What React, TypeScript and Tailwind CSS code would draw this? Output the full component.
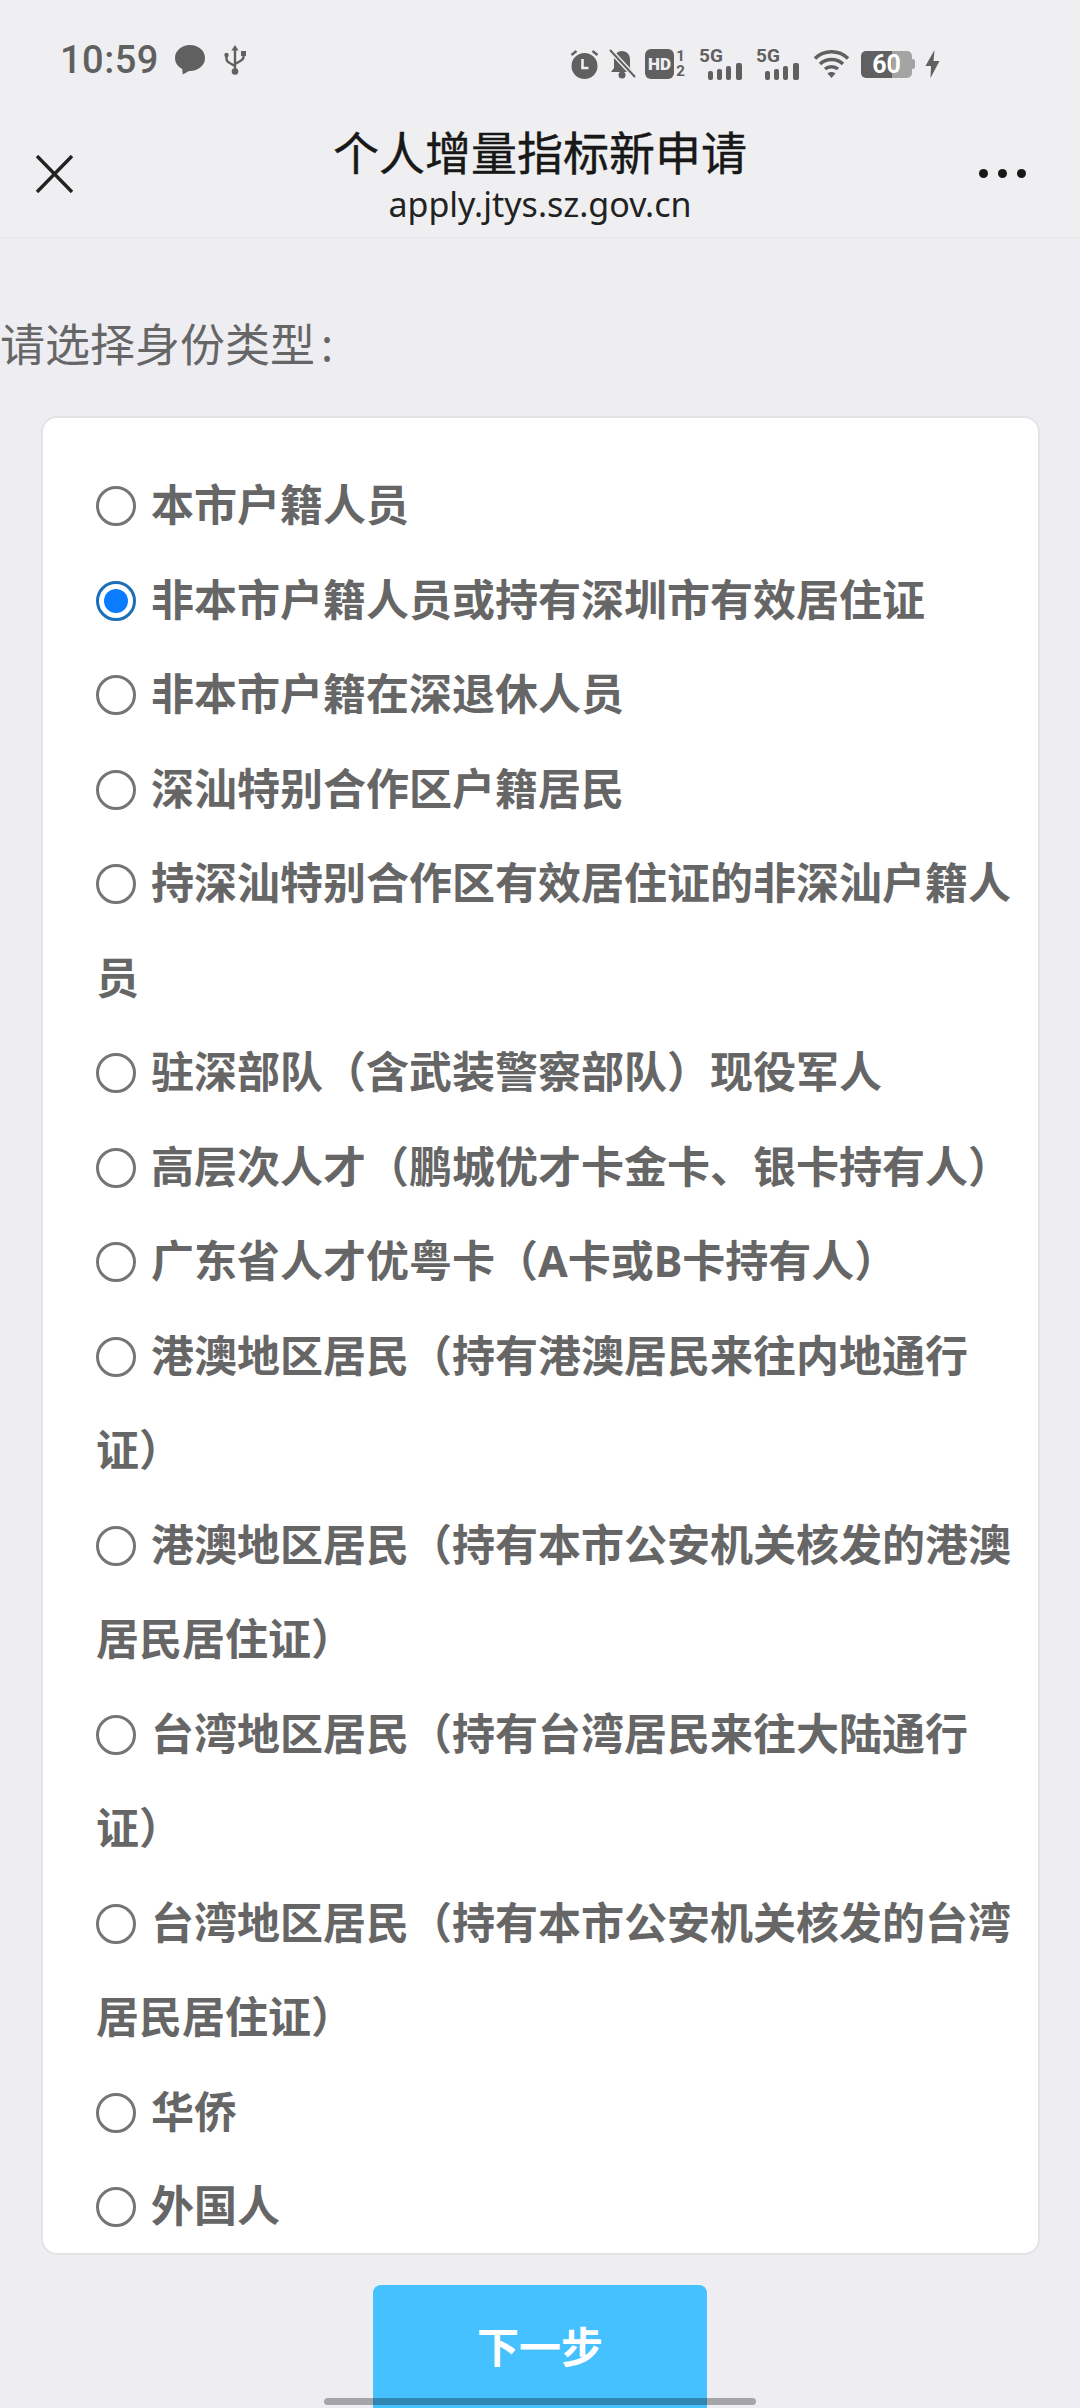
const OPTIONS = [
  '本市户籍人员',
  '非本市户籍人员或持有深圳市有效居住证',
  '非本市户籍在深退休人员',
  '深汕特别合作区户籍居民',
  '持深汕特别合作区有效居住证的非深汕户籍人员',
  '驻深部队（含武装警察部队）现役军人',
  '高层次人才（鹏城优才卡金卡、银卡持有人）',
  '广东省人才优粤卡（A卡或B卡持有人）',
  '港澳地区居民（持有港澳居民来往内地通行证）',
  '港澳地区居民（持有本市公安机关核发的港澳居民居住证）',
  '台湾地区居民（持有台湾居民来往大陆通行证）',
  '台湾地区居民（持有本市公安机关核发的台湾居民居住证）',
  '华侨',
  '外国人',
]

const FONT = "font-['Noto_Sans','Noto_Sans_CJK_SC',sans-serif]"

function Signal() {
  return (
    <div className="flex h-[32px] w-[44px] flex-col">
      <span className="h-[15px] font-['Roboto',sans-serif] text-[19px] font-bold leading-[15px] text-[#606060]">5G</span>
      <svg width="44" height="17" viewBox="0 14 44 17" fill="#606060">
        <rect x="9" y="22" width="5" height="9" rx="2" />
        <rect x="18" y="20" width="5" height="11" rx="2" />
        <rect x="27" y="17" width="5" height="14" rx="2" />
        <rect x="37" y="14" width="6" height="17" rx="2" />
      </svg>
    </div>
  )
}

function StatusBar() {
  return (
    <div className="flex h-[88px] items-end justify-between pb-[8px] pl-[60px] pr-[140px]">
      <div className="flex items-center">
        <span className="font-['Roboto',sans-serif] text-[38px] font-medium leading-[40px] tracking-[0.5px] text-[#606060]">10:59</span>
        <svg className="ml-[16px]" width="30" height="30" viewBox="0 0 30 30" fill="#606060">
          <path d="M15 0C6.7 0 0 5.6 0 13c0 4.8 2.9 8.800 7.200 11l.6 5.600 6.200-3.700H15c8.300 0 15-5.600 15-13S23.300 0 15 0z" />
        </svg>
        <svg className="ml-[19px]" width="22" height="30" viewBox="0 0 22 30" fill="none" stroke="#606060" strokeWidth="2.400">
          <path d="M11 4v22M2.500 11v3c0 2.500 2 3.500 4 4.500l4.500 2.500M19.500 9v3c0 2.500-2 3.500-4 4.500L11 19" />
          <path d="M11 0l3.600 5.500H7.400z" fill="#606060" stroke="none" />
          <circle cx="2.500" cy="10" r="2.200" fill="#606060" stroke="none" />
          <rect x="17" y="6" width="5" height="5" fill="#606060" stroke="none" />
          <circle cx="11" cy="26.500" r="3.300" fill="#606060" stroke="none" />
        </svg>
      </div>
      <div className="flex items-center">
        <svg width="29" height="30" viewBox="0 0 28 30">
          <circle cx="14" cy="17" r="13" fill="#606060" />
          <path d="M1 6l5-4M27 6l-5-4" stroke="#606060" strokeWidth="2.400" />
          <path d="M12 10v9h6" fill="none" stroke="#efeff1" strokeWidth="2.600" />
        </svg>
        <svg className="ml-[10px]" width="27" height="30" viewBox="0 0 27 30">
          <path d="M13 2c-5 0-8 3.500-8 9v8l-3 4h22l-3-4v-8c0-5.500-3-9-8-9z" fill="#606060" />
          <circle cx="13" cy="26" r="3.500" fill="#606060" />
          <path d="M1 1l25 27" stroke="#efeff1" strokeWidth="5" />
          <path d="M1 1l25 27" stroke="#606060" strokeWidth="2" />
        </svg>
        <div className="ml-[9px] flex h-[30px] w-[29px] items-center justify-center rounded-[6px] bg-[#606060] font-['Roboto',sans-serif] text-[17px] font-black leading-none text-[#efeff1]">HD</div>
        <div className="flex w-[13px] flex-col items-center font-['Roboto',sans-serif] text-[15px] font-bold leading-[15px] text-[#606060]">
          <span>1</span>
          <span>2</span>
        </div>
        <div className="ml-[12px] flex">
          <Signal />
        </div>
        <div className="ml-[13px] flex">
          <Signal />
        </div>
        <svg className="ml-[13px]" width="37" height="30" viewBox="0 0 36 30" fill="none" stroke="#606060" strokeWidth="3.600">
          <path d="M1.500 9.500C10.500 .5 25.500 .5 34.500 9.500" />
          <path d="M6.500 15c6.500-6 16.500-6 23 0" />
          <path d="M11.500 20c3.500-3 9.500-3 13 0" />
          <path d="M14 24.500l4 4.500 4-4.500c-2-2-6-2-8 0z" fill="#606060" stroke="none" />
        </svg>
        <div className="ml-[11px] flex items-center">
          <div className="flex h-[27px] w-[51px] items-center justify-center rounded-[5px] bg-[linear-gradient(90deg,#606060_60%,#a4a4a4_60%)] font-['Roboto',sans-serif] text-[25px] font-bold leading-none text-white">60</div>
          <div className="h-[10px] w-[3px] rounded-r-[2px] bg-[#a4a4a4]" />
        </div>
        <svg className="ml-[10px]" width="15" height="28" viewBox="0 0 14 28" fill="#606060">
          <path d="M9 0L0 16h5.500L5 28l9-17H8z" />
        </svg>
      </div>
    </div>
  )
}

function Header() {
  return (
    <div className="grid h-[150px] grid-cols-[1fr_auto_1fr] items-start border-b border-[#e4e4e6] px-[36px]">
      <svg className="mt-[67px]" width="37" height="38" viewBox="0 0 37 38" fill="none" stroke="#222222" strokeWidth="3.400">
        <path d="M1 1l35 36M36 1L1 37" />
      </svg>
      <div className="mt-[41px] flex flex-col items-center">
        <span className="text-[46px] font-normal leading-[46px] text-[#181818] [-webkit-text-stroke:0.4px_#181818]">个人增量指标新申请</span>
        <span className="mt-[9px] text-[34px] leading-[40px] text-[#222222]">apply.jtys.sz.gov.cn</span>
      </div>
      <div className="mr-[18px] mt-[81px] flex justify-end gap-[10px]">
        <div className="h-[9px] w-[9px] rounded-full bg-[#181818]" />
        <div className="h-[9px] w-[9px] rounded-full bg-[#181818]" />
        <div className="h-[9px] w-[9px] rounded-full bg-[#181818]" />
      </div>
    </div>
  )
}

export default function App() {
  const selected = 1

  return (
    <div className={`relative h-[2408px] w-[1080px] overflow-hidden bg-[#eeeef2] ${FONT}`}>
      <div className="bg-[#efeff1]">
        <StatusBar />
        <Header />
      </div>

      <p className="mt-[80px] text-[45px] leading-[54px] text-[#666666]">
        请选择身份类型<span className="ml-[6px]">:</span>
      </p>

      {/* Options card */}
      <div className="ml-[41px] mt-[44px] h-[1839px] w-[999px] rounded-[16px] border-2 border-[#e3e3e6] bg-white pl-[53px] pr-[14px] pt-[40px]">
        {OPTIONS.map((option, index) => (
          <label key={option} className="block text-[43px] font-bold leading-[94.500px] text-[#666666]">
            <span
              className={`mr-[15px] inline-block h-[40px] w-[40px] rounded-full align-[-5px] ${
                index === selected ? 'border-[3px] border-[#1a6fb8] bg-white p-[5px]' : 'border-[3px] border-[#757575] bg-white'
              }`}
            >
              {index === selected && <span className="block h-full w-full rounded-full bg-[#0a7cff]" />}
            </span>
            {option}
          </label>
        ))}
      </div>

      {/* Next button */}
      <div className="mt-[30px] flex justify-center">
        <button className="h-[140px] w-[334px] rounded-t-[8px] bg-[#45c1ff] pb-[17px] text-[42px] font-bold leading-[122px] text-white">
          下一步
        </button>
      </div>

      <div className="absolute bottom-[3px] left-[324px] h-[7px] w-[432px] rounded-full bg-black/30" />
    </div>
  )
}
